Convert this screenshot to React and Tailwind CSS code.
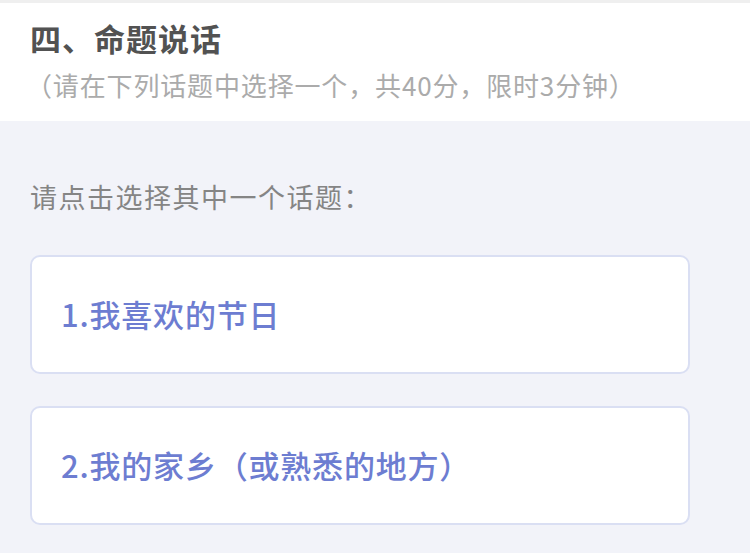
const topics = ['1.我喜欢的节日', '2.我的家乡（或熟悉的地方）'];

const FONT = "font-['Noto_Sans_CJK_SC','Noto_Sans',sans-serif]";

export default function App() {
  return (
    <div className={`min-h-[553px] bg-[#f2f3f9] ${FONT}`}>
      {/* Header */}
      <div className="border-t-[3px] border-[#efefef] bg-white px-[30px] pt-[12px] pb-[18px]">
        <h1 className="text-[31px] leading-[46px] font-bold tracking-[1px] text-[#525252]">四、命题说话</h1>
        <p className="mt-[6px] text-[26px] leading-[36px] tracking-[0.85px] text-[#ababab] -ml-[4px]">
          （请在下列话题中选择一个，共40分，限时3分钟）
        </p>
      </div>

      {/* Body */}
      <div className="px-[30px] pt-[56px]">
        <p className="text-[27px] leading-[40px] tracking-[1.5px] text-[#858585]">请点击选择其中一个话题：</p>

        <div className="mt-[38px] flex flex-col gap-[32px] w-[660px]">
          {topics.map((t) => (
            <div
              key={t}
              className="h-[119px] rounded-[10px] border-2 border-[#dadff3] bg-white flex items-center px-[29px]"
            >
              <span className="text-[31px] tracking-[0.8px] text-[#6d7dd1] font-medium">{t}</span>
            </div>
          ))}
        </div>
      </div>
    </div>
  );
}
